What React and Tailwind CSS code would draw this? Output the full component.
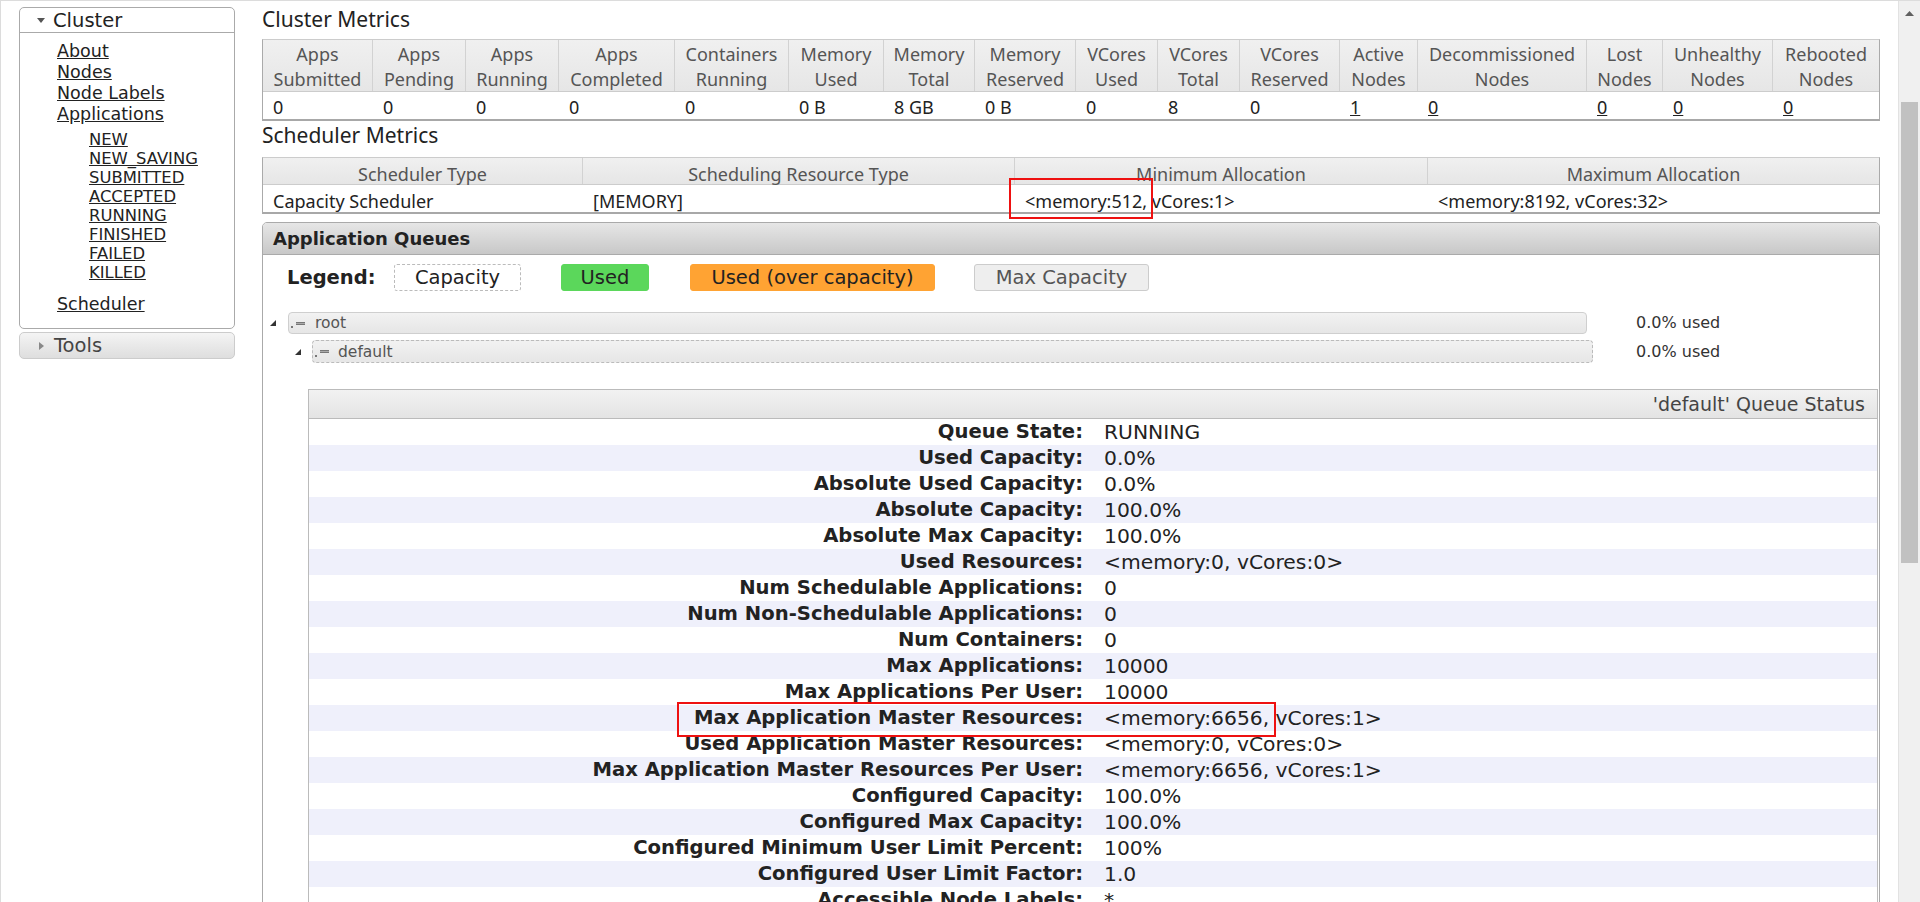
import React from "react";

const clusterCols = [
  ["Apps", "Submitted", 110, "0"],
  ["Apps", "Pending", 93, "0"],
  ["Apps", "Running", 93, "0"],
  ["Apps", "Completed", 116, "0"],
  ["Containers", "Running", 114, "0"],
  ["Memory", "Used", 95, "0 B"],
  ["Memory", "Total", 91, "8 GB"],
  ["Memory", "Reserved", 101, "0 B"],
  ["VCores", "Used", 82, "0"],
  ["VCores", "Total", 82, "8"],
  ["VCores", "Reserved", 100, "0"],
  ["Active", "Nodes", 78, "1", true],
  ["Decommissioned", "Nodes", 169, "0", true],
  ["Lost", "Nodes", 76, "0", true],
  ["Unhealthy", "Nodes", 110, "0", true],
  ["Rebooted", "Nodes", 106, "0", true],
];

const schedCols = [
  ["Scheduler Type", 320, "Capacity Scheduler"],
  ["Scheduling Resource Type", 432, "[MEMORY]"],
  ["Minimum Allocation", 413, "<memory:512, vCores:1>"],
  ["Maximum Allocation", 451, "<memory:8192, vCores:32>"],
];

const statusRows = [
  ["Queue State:", "RUNNING"],
  ["Used Capacity:", "0.0%"],
  ["Absolute Used Capacity:", "0.0%"],
  ["Absolute Capacity:", "100.0%"],
  ["Absolute Max Capacity:", "100.0%"],
  ["Used Resources:", "<memory:0, vCores:0>"],
  ["Num Schedulable Applications:", "0"],
  ["Num Non-Schedulable Applications:", "0"],
  ["Num Containers:", "0"],
  ["Max Applications:", "10000"],
  ["Max Applications Per User:", "10000"],
  ["Max Application Master Resources:", "<memory:6656, vCores:1>"],
  ["Used Application Master Resources:", "<memory:0, vCores:0>"],
  ["Max Application Master Resources Per User:", "<memory:6656, vCores:1>"],
  ["Configured Capacity:", "100.0%"],
  ["Configured Max Capacity:", "100.0%"],
  ["Configured Minimum User Limit Percent:", "100%"],
  ["Configured User Limit Factor:", "1.0"],
  ["Accessible Node Labels:", "*"],
  ["Preemption:", "disabled"],
  ["Default Node Label Expression:", "<DEFAULT_PARTITION>"],
];

const subLinks = ["NEW", "NEW_SAVING", "SUBMITTED", "ACCEPTED", "RUNNING", "FINISHED", "FAILED", "KILLED"];

function DownTri() {
  return (
    <svg width="8" height="5" viewBox="0 0 8 5" className="shrink-0">
      <polygon points="0,0 8,0 4,5" fill="#555" />
    </svg>
  );
}

function RightTri() {
  return (
    <svg width="5" height="8" viewBox="0 0 5 8" className="shrink-0">
      <polygon points="0,0 5,4 0,8" fill="#888" />
    </svg>
  );
}

function OpenTri() {
  return (
    <svg width="6" height="6" viewBox="0 0 6 6" className="shrink-0">
      <polygon points="6,0 6,6 0,6" fill="#333" />
    </svg>
  );
}

function Sidebar() {
  return (
    <aside className="w-[261px] shrink-0 pl-[18px] pt-[6px] font-['DejaVu_Sans',Verdana,sans-serif]">
      <div className="w-[216px] rounded-[5px] border border-[#aaa] bg-white">
        <div className="flex h-[25px] items-center border-b border-[#aaa] pl-[17px]">
          <DownTri />
          <span className="ml-[8px] text-[19.5px] leading-[25px] text-[#222]">Cluster</span>
        </div>
        <ul className="pb-[13px] pl-[37px] pt-[8px] text-[17.5px] leading-[21px] text-[#222]">
          <li><a className="underline">About</a></li>
          <li><a className="underline">Nodes</a></li>
          <li><a className="underline">Node Labels</a></li>
          <li>
            <a className="underline">Applications</a>
            <ul className="pl-[32px] pt-[5px] text-[16.4px] leading-[19px]">
              {subLinks.map((s) => (
                <li key={s}><a className="underline">{s}</a></li>
              ))}
            </ul>
          </li>
          <li className="mt-[12px]"><a className="underline">Scheduler</a></li>
        </ul>
      </div>
      <div className="mt-[3px] flex h-[27px] w-[216px] items-center rounded-[5px] border border-[#ccc] bg-linear-to-b from-[#f4f4f4] to-[#dedede] pl-[19px]">
        <RightTri />
        <span className="ml-[10px] text-[19.5px] leading-[25px] text-[#444]">Tools</span>
      </div>
    </aside>
  );
}

function ClusterMetrics() {
  return (
    <div className="w-[1618px] border-x border-b-2 border-t border-x-[#aaa] border-b-[#a8a8a8] border-t-[#ccc] font-['Noto_Sans',sans-serif] text-[18px]">
      <div className="flex h-[52px] border-b border-[#ccc] bg-linear-to-b from-[#f0f0f0] to-[#e6e6e6] text-[#555]">
        {clusterCols.map((c, i) => (
          <div
            key={i}
            style={{ width: c[2] }}
            className={`flex shrink-0 flex-col items-center pt-[2px] leading-[25px] ${i < clusterCols.length - 1 ? "border-r border-[#d2d2d2]" : ""}`}
          >
            <span>{c[0]}</span>
            <span>{c[1]}</span>
          </div>
        ))}
      </div>
      <div className="flex h-[27px] bg-white text-[#222]">
        {clusterCols.map((c, i) => (
          <div key={i} style={{ width: c[2] }} className="shrink-0 pl-[10px] pt-[3px] leading-[24px]">
            {c[4] ? <a className="underline">{c[3]}</a> : c[3]}
          </div>
        ))}
      </div>
    </div>
  );
}

function SchedulerMetrics() {
  return (
    <div className="w-[1618px] border-x border-b-2 border-t border-x-[#aaa] border-b-[#a8a8a8] border-t-[#ccc] font-['Noto_Sans',sans-serif] text-[18px]">
      <div className="flex h-[27px] border-b border-[#ccc] bg-linear-to-b from-[#f0f0f0] to-[#e6e6e6] text-[#555]">
        {schedCols.map((c, i) => (
          <div
            key={i}
            style={{ width: c[1] }}
            className={`shrink-0 text-center pt-[4px] leading-[24px] ${i < schedCols.length - 1 ? "border-r border-[#d2d2d2]" : ""}`}
          >
            {c[0]}
          </div>
        ))}
      </div>
      <div className="flex h-[27px] bg-white text-[#222]">
        {schedCols.map((c, i) => (
          <div key={i} style={{ width: c[1] }} className="shrink-0 pl-[10px] pt-[4px] leading-[24px]">
            {c[2]}
          </div>
        ))}
      </div>
    </div>
  );
}

function Dash() {
  return (
    <span className="flex items-center text-[#777]">
      <span className="mt-[8px] h-[2px] w-[2px] bg-[#777]" />
      <span className="ml-[3px] h-[3px] w-[9px] border-y border-[#777] bg-[#aaa]" />
    </span>
  );
}

function ApplicationQueues() {
  return (
    <div className="mt-[8px] w-[1618px] rounded-t-[5px] border border-[#aaa] bg-white font-['DejaVu_Sans',Verdana,sans-serif]">
      <div className="h-[32px] rounded-t-[4px] border-b border-[#aaa] bg-linear-to-b from-[#e6e6e6] to-[#c8c8c8] pl-[10px] text-[18px] font-bold leading-[32px] text-[#222]">
        Application Queues
      </div>
      <div className="mt-[9px] flex items-center pl-[24px] text-[19.5px]">
        <span className="h-[27px] w-[107px] pt-[1px] font-bold leading-[25px] text-[#222]">Legend:</span>
        <span className="h-[27px] w-[127px] rounded-[3px] border border-dashed border-[#bbb] bg-white pt-[1px] text-center leading-[24px] text-[#222]">Capacity</span>
        <span className="ml-[40px] h-[27px] w-[88px] rounded-[3px] border border-[#5bd75b] bg-[#5bd75b] pt-[1px] text-center leading-[24px] text-[#222]">Used</span>
        <span className="ml-[41px] h-[27px] w-[245px] rounded-[3px] border border-[#ffa333] bg-[#ffa333] pt-[1px] text-center leading-[24px] text-[#222]">Used (over capacity)</span>
        <span className="ml-[39px] h-[27px] w-[175px] rounded-[3px] border border-[#ccc] bg-[#eeeeee] pt-[1px] text-center leading-[24px] text-[#555]">Max Capacity</span>
      </div>

      <div className="mt-[21px] flex h-[22px] items-center pl-[7px]">
        <OpenTri />
        <div className="ml-[12px] flex h-[22px] w-[1299px] items-center rounded-[4px] border border-[#cfcfcf] bg-linear-to-b from-[#f2f2f2] to-[#e6e6e6] pl-[2px] text-[15.5px] text-[#555]">
          <Dash />
          <span className="ml-[10px] leading-[20px]">root</span>
        </div>
        <span className="ml-[49px] text-[16px] text-[#333]">0.0% used</span>
      </div>
      <div className="mt-[6px] flex h-[23px] items-center pl-[32px]">
        <OpenTri />
        <div className="ml-[11px] flex h-[23px] w-[1281px] items-center rounded-[4px] border border-dashed border-[#bbb] bg-linear-to-b from-[#f2f2f2] to-[#e6e6e6] pl-[2px] text-[15.5px] text-[#555]">
          <Dash />
          <span className="ml-[9px] leading-[20px]">default</span>
        </div>
        <span className="ml-[43px] text-[16px] text-[#333]">0.0% used</span>
      </div>

      <div className="ml-[45px] mt-[26px] w-[1570px] border border-[#bbb] bg-white">
        <div className="h-[29px] border-b border-[#bbb] bg-linear-to-b from-[#f2f2f2] to-[#e4e4e4] pr-[12px] text-right text-[19px] leading-[29px] text-[#444]">
          'default' Queue Status
        </div>
        {statusRows.map((r, i) => (
          <div key={i} className={`flex h-[26px] leading-[26px] ${i % 2 === 1 ? "bg-[#eff0fb]" : "bg-white"}`}>
            <div className="w-[785px] shrink-0 pr-[11px] text-right text-[19.6px] font-bold text-[#222]">{r[0]}</div>
            <div className="pl-[10px] text-[20.3px] text-[#222]">{r[1]}</div>
          </div>
        ))}
      </div>
    </div>
  );
}

function Scrollbar() {
  return (
    <div className="flex h-full w-[22px] shrink-0 flex-col items-center border-l border-[#e2e2e2] bg-[#f0f0f0]">
      <div className="flex h-[24px] items-center justify-center">
        <svg width="9" height="5" viewBox="0 0 9 5">
          <polygon points="0,5 9,5 4.5,0" fill="#606060" />
        </svg>
      </div>
      <div className="mt-[77px] h-[461px] w-[17px] bg-[#c1c1c1]" />
    </div>
  );
}

export default function App() {
  return (
    <div className="relative flex h-[902px] w-[1920px] overflow-hidden border-l border-t border-[#dcdcdc] bg-white text-[#222]">
      <Sidebar />
      <main className="w-[1618px] shrink-0">
        <h1 className="h-[38px] pt-[5px] font-['Noto_Sans',sans-serif] text-[21px] font-normal leading-[26px] text-[#222]">
          Cluster Metrics
        </h1>
        <ClusterMetrics />
        <h2 className="h-[36px] pt-[1px] font-['Noto_Sans',sans-serif] text-[21px] font-normal leading-[26px] text-[#222]">
          Scheduler Metrics
        </h2>
        <SchedulerMetrics />
        <ApplicationQueues />
      </main>
      <div className="w-[18px] shrink-0" />
      <Scrollbar />
      <div className="pointer-events-none absolute left-[1008px] top-[177px] h-[41px] w-[144px] border-2 border-[#ee1111]" />
      <div className="pointer-events-none absolute left-[676px] top-[701px] h-[35px] w-[599px] border-2 border-[#ee1111]" />
    </div>
  );
}
